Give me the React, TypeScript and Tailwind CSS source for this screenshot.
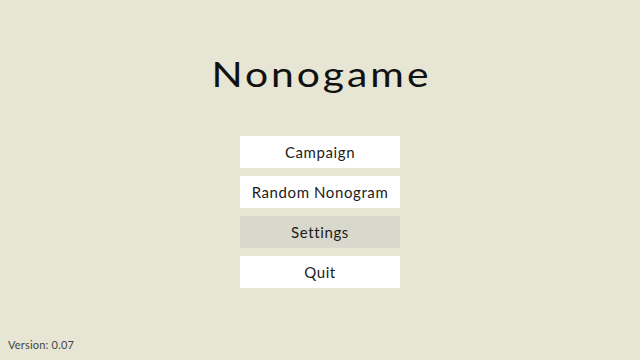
import React from "react";

export default function App() {
  const items = ["Campaign", "Random Nonogram", "Settings", "Quit"];
  return (
    <div
      className="w-[640px] h-[360px] bg-[#e7e5d3] flex flex-col items-center relative text-[#1c1c1c]"
      style={{ fontFamily: "Lato, 'Noto Sans', sans-serif" }}
    >
      <h1 className="mt-[56px] h-[35px] text-[34px] leading-[35px] font-normal tracking-[2.5px] pl-[2.5px] scale-x-[1.2] text-[#111]">Nonogame</h1>
      <div className="mt-[45px] flex flex-col gap-[8px]">
        {items.map((t) => (
          <div
            key={t}
            className={`w-[160px] h-[32px] flex items-center justify-center text-[15px] tracking-[0.6px] ${
              t === "Settings" ? "bg-[#d8d8cd]" : "bg-white"
            }`}
          >
            {t}
          </div>
        ))}
      </div>
      <div className="absolute left-[8px] bottom-[7px] text-[11px] text-[#444] tracking-[0.2px]">Version: 0.07</div>
    </div>
  );
}
